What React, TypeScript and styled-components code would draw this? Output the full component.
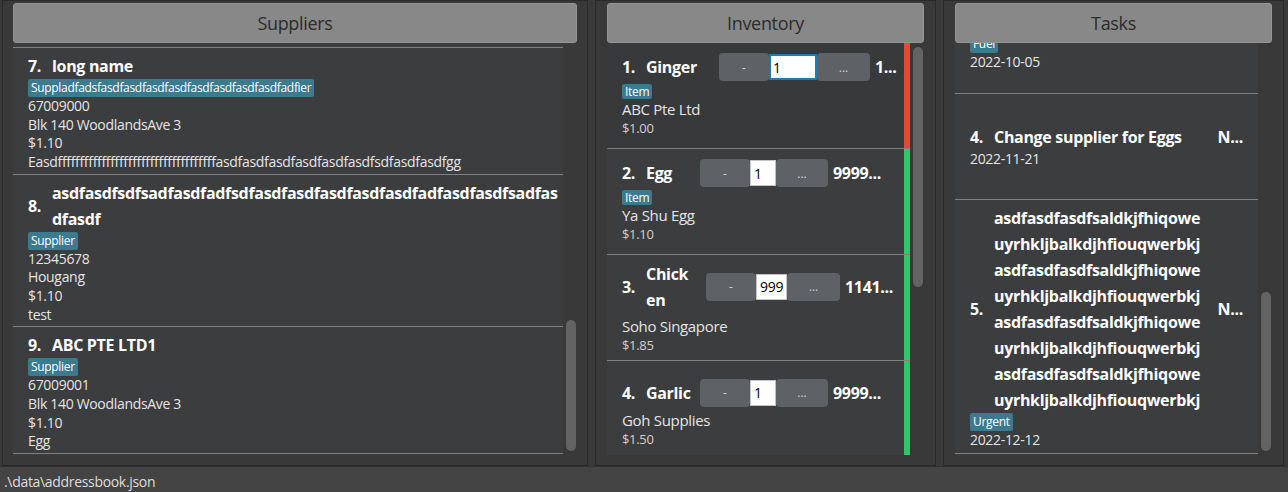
import React from 'react';
import styled, { createGlobalStyle } from 'styled-components';

const GlobalStyle = createGlobalStyle`
  html, body { margin: 0; padding: 0; background: #393939; }
  body {
    font-family: "Open Sans", "Noto Sans", sans-serif;
    letter-spacing: -0.02em;
  }
  * { box-sizing: border-box; }
`;

const Window = styled.div`
  width: 1288px;
  height: 492px;
  display: flex;
  flex-direction: column;
  background: #393939;
  overflow: hidden;
`;

const Main = styled.div`
  height: 466px;
  flex: none;
  display: flex;
  gap: 7px;
  padding-left: 2px;
`;

const Panel = styled.section<{ $w: number; $pl: number; $pr: number }>`
  width: ${(p) => p.$w}px;
  flex: none;
  height: 466px;
  border: 1px solid #2a2a2a;
  padding: 2px ${(p) => p.$pr}px 10px ${(p) => p.$pl}px;
  display: flex;
  flex-direction: column;
  background: #393939;
`;

const Header = styled.div`
  height: 40px;
  flex: none;
  background: #888888;
  border: 1px solid #949494;
  border-radius: 3px;
  display: flex;
  align-items: center;
  justify-content: center;
  font-size: 18px;
  color: #2c2c2c;
`;

const ListArea = styled.div`
  flex: 1;
  min-height: 0;
  display: flex;
`;

const Viewport = styled.div<{ $padTop?: number }>`
  flex: 1;
  min-width: 0;
  overflow: hidden;
  background: #3c3d3f;
  padding-top: ${(p) => p.$padTop ?? 0}px;
`;

const Scroller = styled.div<{ $offset: number }>`
  margin-top: ${(p) => -p.$offset}px;
`;

const ScrollTrack = styled.div`
  width: 14px;
  flex: none;
  padding-left: 3px;
  display: flex;
  flex-direction: column;
`;

const Thumb = styled.div<{ $top: number; $h: number }>`
  width: 10px;
  margin-top: ${(p) => p.$top}px;
  height: ${(p) => p.$h}px;
  background: #636363;
  border-radius: 5px;
`;

const TitleRow = styled.div`
  display: flex;
  align-items: center;
  font-size: 16px;
  font-weight: 700;
  line-height: 26px;
  color: #ffffff;
`;

const Index = styled.span`
  flex: none;
  width: 24px;
`;

const Name = styled.span`
  min-width: 0;
`;

const Tag = styled.span<{ $small?: boolean }>`
  align-self: flex-start;
  background: #3b7a8f;
  color: #ffffff;
  font-size: 12px;
  line-height: ${(p) => (p.$small ? 13 : 16)}px;
  padding: 1px 3px;
  border-radius: 2px;
  white-space: nowrap;
`;

const Detail = styled.div`
  font-size: 14px;
  line-height: 18.67px;
  color: #e4e4e4;
  white-space: nowrap;
`;

/* Suppliers */
const SupplierCard = styled.div`
  display: flex;
  flex-direction: column;
  background: #3c3d3f;
  border-bottom: 1px solid #808080;
  padding: 5px 10px 2px 15px;
  &:first-child { border-top: 1px solid #808080; }
`;

/* Inventory */
const InvCard = styled.div<{ $dim?: boolean }>`
  height: 106px;
  display: flex;
  border-bottom: 1px solid #808080;
  background: ${(p) => (p.$dim ? '#38393b' : '#3c3d3f')};
`;

const InvBody = styled.div`
  flex: 1;
  min-width: 0;
  display: flex;
  flex-direction: column;
  justify-content: center;
  padding: 0 6px 0 15px;
`;

const StockBar = styled.div<{ $color: string }>`
  width: 6px;
  flex: none;
  background: ${(p) => p.$color};
`;

const InvTitleRow = styled(TitleRow)`
  min-height: 28px;
  margin-bottom: 3px;
`;

const InvName = styled.span<{ $w: number }>`
  flex: none;
  width: ${(p) => p.$w}px;
  padding-right: 10px;
`;

const Controls = styled.div`
  display: flex;
  align-items: center;
  flex: none;
`;

const StepButton = styled.button<{ $w: number }>`
  width: ${(p) => p.$w}px;
  height: 28px;
  border: none;
  border-radius: 4px;
  background: #5e6165;
  color: #d4d4d4;
  font-family: "Open Sans", sans-serif;
  font-size: 12px;
  padding: 0;
`;

const QtyInput = styled.input<{ $w: number; $focused?: boolean }>`
  width: ${(p) => p.$w}px;
  height: 26px;
  border: ${(p) => (p.$focused ? '2px solid #1c7ab4' : '1px solid #c4c4c4')};
  background: #ffffff;
  color: #000000;
  font-family: "Open Sans", sans-serif;
  font-size: 14px;
  letter-spacing: -0.02em;
  padding: 0 0 0 ${(p) => (p.$focused ? 2 : 3)}px;
  outline: none;
`;

const Count = styled.span`
  margin-left: 5px;
  white-space: nowrap;
`;

const SupplierLine = styled.div`
  font-size: 15px;
  line-height: 20px;
  color: #e4e4e4;
  white-space: nowrap;
`;

const Price = styled.div`
  font-size: 13px;
  line-height: 19px;
  color: #cfcfcf;
`;

/* Tasks */
const TaskCard = styled.div<{ $partial?: boolean }>`
  min-height: ${(p) => (p.$partial ? 0 : 106)}px;
  display: flex;
  flex-direction: column;
  justify-content: center;
  background: #3c3d3f;
  border-bottom: 1px solid #808080;
  padding: 5px 15px ${(p) => (p.$partial ? 21 : 4)}px 15px;
`;

const TaskName = styled.span`
  flex: 0 1 auto;
  max-width: 222px;
`;

const TaskStatus = styled.span`
  margin-left: auto;
  flex: none;
`;

const StatusBar = styled.footer`
  height: 26px;
  flex: none;
  background: #444444;
  border-top: 1px solid #2f2f2f;
  padding: 5px 0 0 4px;
  font-size: 14px;
  line-height: 19px;
  color: #dedede;
`;

const withBreaks = (parts: string[]) =>
  parts.map((s, i) => (
    <React.Fragment key={i}>
      {s}
      {i < parts.length - 1 && <wbr />}
    </React.Fragment>
  ));

const suppliers = [
  {
    idx: '7.',
    name: ['long name'],
    tag: 'Suppladfadsfasdfasdfasdfasdfasdfasdfasdfasdfadfier',
    lines: [
      '67009000',
      'Blk 140 WoodlandsAve 3',
      '$1.10',
      'Easdffffffffffffffffffffffffffffffffffffasdfasdfasdfasdfasdfasdfsdfasdfasdfgg',
    ],
  },
  {
    idx: '8.',
    name: ['asdfasdfsdfsadfasdfadfsdfasdfasdfasdfasdfasdfadfasdfasdfsadfas', 'dfasdf'],
    tag: 'Supplier',
    lines: ['12345678', 'Hougang', '$1.10', 'test'],
  },
  {
    idx: '9.',
    name: ['ABC PTE LTD1'],
    tag: 'Supplier',
    lines: ['67009001', 'Blk 140 WoodlandsAve 3', '$1.10', 'Egg'],
  },
];

const inventory = [
  { idx: '1.', name: ['Ginger'], nameW: 73, minusW: 50, inputW: 48, dotsW: 53, qty: '1', focused: true, count: '1...', tag: 'Item', supplier: 'ABC Pte Ltd', price: '$1.00', color: '#e5473b', dim: true },
  { idx: '2.', name: ['Egg'], nameW: 54, minusW: 50, inputW: 26, dotsW: 52, qty: '1', count: '9999...', tag: 'Item', supplier: 'Ya Shu Egg', price: '$1.10', color: '#2dc86a' },
  { idx: '3.', name: ['Chick', 'en'], nameW: 60, minusW: 50, inputW: 31, dotsW: 53, qty: '999', count: '1141...', supplier: 'Soho Singapore', price: '$1.85', color: '#2dc86a' },
  { idx: '4.', name: ['Garlic'], nameW: 54, minusW: 50, inputW: 26, dotsW: 52, qty: '1', count: '9999...', supplier: 'Goh Supplies', price: '$1.50', color: '#2dc86a' },
];

const longTask = 'asdfasdfasdfsaldkjfhiqowe|uyrhkljbalkdjhfiouqwerbkj|asdfasdfasdfsaldkjfhiqowe|uyrhkljbalkdjhfiouqwerbkj|asdfasdfasdfsaldkjfhiqowe|uyrhkljbalkdjhfiouqwerbkj|asdfasdfasdfsaldkjfhiqowe|uyrhkljbalkdjhfiouqwerbkj';

type Task = { idx: string; name?: string[]; status?: string; tag?: string; date: string; partial?: boolean };

const tasks: Task[] = [
  { idx: '3.', tag: 'Fuel', date: '2022-10-05', partial: true },
  { idx: '4.', name: ['Change supplier for Eggs'], status: 'N...', date: '2022-11-21' },
  { idx: '5.', name: longTask.split('|'), status: 'N...', tag: 'Urgent', date: '2022-12-12' },
];

export default function App() {
  return (
    <>
      <GlobalStyle />
      <Window>
        <Main>
          <Panel $w={586} $pl={10} $pr={10}>
            <Header>Suppliers</Header>
            <ListArea>
              <Viewport $padTop={4}>
                {suppliers.map((s) => (
                  <SupplierCard key={s.idx}>
                    <TitleRow>
                      <Index>{s.idx}</Index>
                      <Name>{withBreaks(s.name)}</Name>
                    </TitleRow>
                    <Tag>{s.tag}</Tag>
                    {s.lines.map((l, i) => (
                      <Detail key={i}>{l}</Detail>
                    ))}
                  </SupplierCard>
                ))}
              </Viewport>
              <ScrollTrack>
                <Thumb $top={277} $h={131} />
              </ScrollTrack>
            </ListArea>
          </Panel>

          <Panel $w={341} $pl={11} $pr={11}>
            <Header>Inventory</Header>
            <ListArea>
              <Viewport>
                {inventory.map((it) => (
                  <InvCard key={it.idx} $dim={it.dim}>
                    <InvBody>
                      <InvTitleRow>
                        <Index>{it.idx}</Index>
                        <InvName $w={it.nameW}>{withBreaks(it.name)}</InvName>
                        <Controls>
                          <StepButton $w={it.minusW}>-</StepButton>
                          <QtyInput $w={it.inputW} $focused={it.focused} defaultValue={it.qty} readOnly />
                          <StepButton $w={it.dotsW}>...</StepButton>
                        </Controls>
                        <Count>{it.count}</Count>
                      </InvTitleRow>
                      {it.tag && <Tag $small>{it.tag}</Tag>}
                      <SupplierLine>{it.supplier}</SupplierLine>
                      <Price>{it.price}</Price>
                    </InvBody>
                    <StockBar $color={it.color} />
                  </InvCard>
                ))}
              </Viewport>
              <ScrollTrack>
                <Thumb $top={4} $h={240} />
              </ScrollTrack>
            </ListArea>
          </Panel>

          <Panel $w={341} $pl={11} $pr={11}>
            <Header>Tasks</Header>
            <ListArea>
              <Viewport>
                <Scroller $offset={13}>
                  {tasks.map((t) => (
                    <TaskCard key={t.idx} $partial={t.partial}>
                      {t.name && (
                        <TitleRow>
                          <Index>{t.idx}</Index>
                          <TaskName>{withBreaks(t.name)}</TaskName>
                          <TaskStatus>{t.status}</TaskStatus>
                        </TitleRow>
                      )}
                      {t.tag && <Tag>{t.tag}</Tag>}
                      <Detail>{t.date}</Detail>
                    </TaskCard>
                  ))}
                </Scroller>
              </Viewport>
              <ScrollTrack>
                <Thumb $top={249} $h={159} />
              </ScrollTrack>
            </ListArea>
          </Panel>
        </Main>
        <StatusBar>.\data\addressbook.json</StatusBar>
      </Window>
    </>
  );
}
